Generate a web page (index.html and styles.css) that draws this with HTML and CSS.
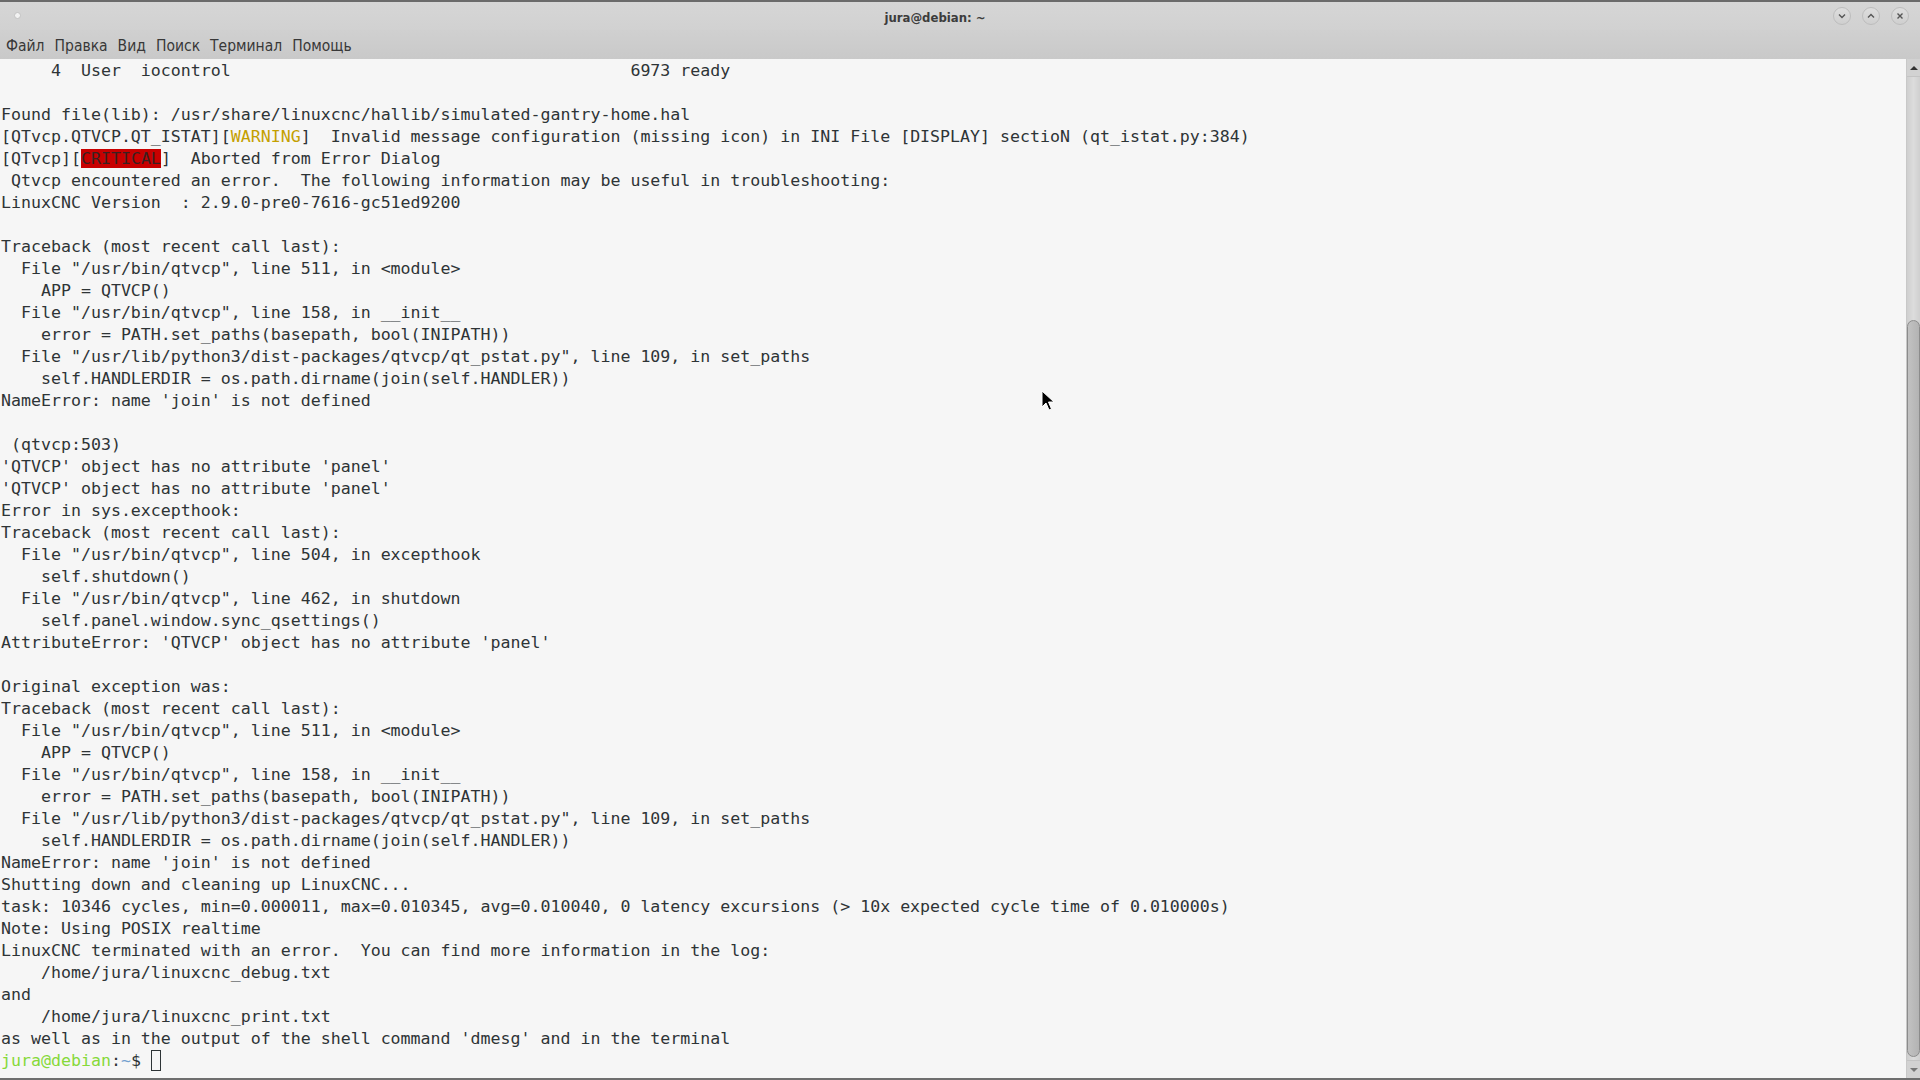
FILE: index.html
```html
<!DOCTYPE html>
<html lang="ru">
<head>
    <meta charset="UTF-8" />
    <title>jura@debian: ~</title>
    <link rel="stylesheet" href="styles.css">
</head>
<body>
  <div class="window">
    <div class="titlebar">
        <div class="title-left"><span class="dot"></span></div>
        <div class="title">jura@debian: ~</div>
        <div class="title-buttons">
            <span class="wbtn">
                <svg width="10" height="10" viewBox="0 0 10 10"><path d="M2 3.5 L5 6.5 L8 3.5" fill="none" stroke="#555" stroke-width="1.4"/></svg>
            </span>
            <span class="wbtn">
                <svg width="10" height="10" viewBox="0 0 10 10"><path d="M2 6.5 L5 3.5 L8 6.5" fill="none" stroke="#555" stroke-width="1.4"/></svg>
            </span>
            <span class="wbtn">
                <svg width="10" height="10" viewBox="0 0 10 10"><path d="M2.5 2.5 L7.5 7.5 M7.5 2.5 L2.5 7.5" fill="none" stroke="#555" stroke-width="1.4"/></svg>
            </span>
        </div>
    </div>

    <div class="menubar">
        <a href="">Файл</a>
        <a href="">Правка</a>
        <a href="">Вид</a>
        <a href="">Поиск</a>
        <a href="">Терминал</a>
        <a href="">Помощь</a>
    </div>

    <div class="term-area">
<pre class="terminal">     4  User  iocontrol                                        6973 ready

Found file(lib): /usr/share/linuxcnc/hallib/simulated-gantry-home.hal
[QTvcp.QTVCP.QT_ISTAT][<span class="warn">WARNING</span>]  Invalid message configuration (missing icon) in INI File [DISPLAY] sectioN (qt_istat.py:384)
[QTvcp][<span class="crit">CRITICAL</span>]  Aborted from Error Dialog
 Qtvcp encountered an error.  The following information may be useful in troubleshooting:
LinuxCNC Version  : 2.9.0-pre0-7616-gc51ed9200

Traceback (most recent call last):
  File "/usr/bin/qtvcp", line 511, in &lt;module&gt;
    APP = QTVCP()
  File "/usr/bin/qtvcp", line 158, in __init__
    error = PATH.set_paths(basepath, bool(INIPATH))
  File "/usr/lib/python3/dist-packages/qtvcp/qt_pstat.py", line 109, in set_paths
    self.HANDLERDIR = os.path.dirname(join(self.HANDLER))
NameError: name 'join' is not defined

 (qtvcp:503)
'QTVCP' object has no attribute 'panel'
'QTVCP' object has no attribute 'panel'
Error in sys.excepthook:
Traceback (most recent call last):
  File "/usr/bin/qtvcp", line 504, in excepthook
    self.shutdown()
  File "/usr/bin/qtvcp", line 462, in shutdown
    self.panel.window.sync_qsettings()
AttributeError: 'QTVCP' object has no attribute 'panel'

Original exception was:
Traceback (most recent call last):
  File "/usr/bin/qtvcp", line 511, in &lt;module&gt;
    APP = QTVCP()
  File "/usr/bin/qtvcp", line 158, in __init__
    error = PATH.set_paths(basepath, bool(INIPATH))
  File "/usr/lib/python3/dist-packages/qtvcp/qt_pstat.py", line 109, in set_paths
    self.HANDLERDIR = os.path.dirname(join(self.HANDLER))
NameError: name 'join' is not defined
Shutting down and cleaning up LinuxCNC...
task: 10346 cycles, min=0.000011, max=0.010345, avg=0.010040, 0 latency excursions (&gt; 10x expected cycle time of 0.010000s)
Note: Using POSIX realtime
LinuxCNC terminated with an error.  You can find more information in the log:
    /home/jura/linuxcnc_debug.txt
and
    /home/jura/linuxcnc_print.txt
as well as in the output of the shell command 'dmesg' and in the terminal
<span class="user">jura@debian</span>:<span class="path">~</span>$ <span class="cursor"></span></pre>

        <div class="scrollbar">
            <div class="sb-btn">
                <svg width="8" height="6" viewBox="0 0 8 6"><path d="M0 5 L4 1 L8 5 Z" fill="#333"/></svg>
            </div>
            <div class="sb-track">
                <div class="sb-thumb"></div>
            </div>
            <div class="sb-btn">
                <svg width="8" height="6" viewBox="0 0 8 6"><path d="M0 1 L4 5 L8 1 Z" fill="#777"/></svg>
            </div>
        </div>

        <!-- mouse pointer -->
        <svg class="pointer" width="14" height="22" viewBox="0 0 14 22">
            <path d="M1 1 L1 17 L5 13 L8 20 L10.5 19 L7.5 12 L13 12 Z" fill="#000" stroke="#fff" stroke-width="1"/>
        </svg>
    </div>
  </div>
</body>
</html>
```

FILE: styles.css
```css
* {
    margin: 0;
    padding: 0;
    box-sizing: border-box;
}

body {
    overflow: hidden;
    background-color: #f6f6f6;
    font-family: "DejaVu Sans", sans-serif;
}

.window {
    display: flex;
    flex-direction: column;
    width: 1920px;
    height: 1080px;
    border-bottom: 2px solid #6e6e6e;
}

.titlebar {
    display: flex;
    align-items: center;
    height: 30px;
    padding-top: 2px;
    border-top: 2px solid #6b6b6b;
    background: linear-gradient(#d6d6d6, #d1d1d1);
}

.title-left {
    width: 40px;
    padding-left: 14px;
    padding-bottom: 4px;
    display: flex;
    align-items: center;
}

.dot {
    width: 7px;
    height: 7px;
    border-radius: 50%;
    background-color: #f2f2f2;
    border: 1px solid #c2c2c2;
}

.title {
    flex: 1;
    text-align: center;
    font-family: "DejaVu Sans Condensed", "DejaVu Sans", sans-serif;
    font-stretch: condensed;
    font-weight: bold;
    font-size: 13px;
    color: #3c3c3c;
}

.title-buttons {
    width: 90px;
    display: flex;
    gap: 11px;
    padding-left: 3px;
    padding-bottom: 2px;
}

.wbtn {
    width: 18px;
    height: 18px;
    border-radius: 50%;
    border: 1px solid #bdbdbd;
    background: linear-gradient(#dedede, #cfcfcf);
    display: flex;
    align-items: center;
    justify-content: center;
}

.menubar {
    display: flex;
    align-items: center;
    gap: 10px;
    height: 29px;
    padding: 3px 0 0 6px;
    background: linear-gradient(#d0d0d0, #c9c9c9);
}

.menubar a {
    font-family: "DejaVu Sans Condensed", "DejaVu Sans", sans-serif;
    font-stretch: condensed;
    font-size: 15.5px;
    color: #383838;
    text-decoration: none;
}

.term-area {
    flex: 1;
    display: flex;
    position: relative;
    background-color: #f6f6f6;
}

.terminal {
    flex: 1;
    padding-top: 1px;
    padding-left: 1px;
    font-family: "DejaVu Sans Mono", monospace;
    font-size: 16.6px;
    line-height: 22px;
    color: #2e3436;
    white-space: pre;
    overflow: hidden;
}

.warn {
    color: #c4a000;
}

.crit {
    background-color: #c80000;
    color: #3a2020;
}

.user {
    color: #86d93a;
}

.path {
    color: #729fcf;
}

.cursor {
    display: inline-block;
    width: 10px;
    height: 21px;
    border: 1.5px solid #2e3436;
    vertical-align: -5px;
}

.scrollbar {
    width: 14px;
    display: flex;
    flex-direction: column;
    background-color: #d4d4d4;
    border-left: 1px solid #c8c8c8;
}

.sb-btn {
    height: 18px;
    display: flex;
    align-items: center;
    justify-content: center;
    background-color: #d2d2d2;
    border-bottom: 1px solid #c4c4c4;
}

.sb-btn:last-child {
    border-bottom: none;
    border-top: 1px solid #c4c4c4;
}

.sb-track {
    flex: 1;
    padding-top: 243px;
    padding-bottom: 3px;
    background: linear-gradient(90deg, #cfcfcf, #dcdcdc 50%, #cfcfcf);
}

.sb-thumb {
    height: 100%;
    border: 1px solid #8c8c8c;
    border-radius: 7px;
    background: linear-gradient(90deg, #c2c2c2, #b3b3b3);
}

.pointer {
    position: absolute;
    left: 1041px;
    top: 331px;
}
```
